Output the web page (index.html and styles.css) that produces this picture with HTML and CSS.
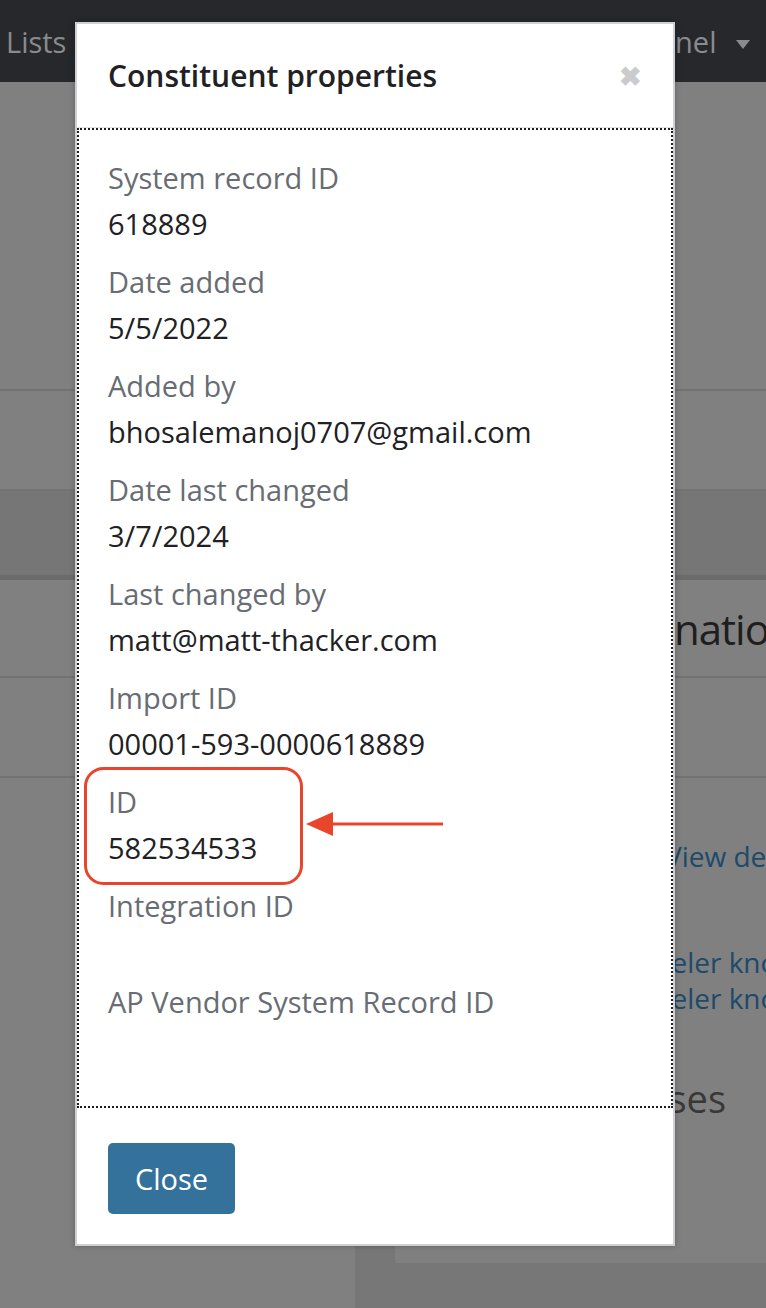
FILE: index.html
```html
<!DOCTYPE html>
<html lang="en">
<head>
    <meta charset="UTF-8">
    <title>Constituent properties</title>
    <link rel="stylesheet" href="styles.css">
</head>
<body>

<div id="page">
    <header class="topbar">
        <span class="nav-item">Lists</span>
        <span class="nav-item nav-right">nel <span class="caret"></span></span>
    </header>

    <div class="row row-tall"></div>
    <div class="row row-mid"></div>
    <div class="row row-band"></div>
    <div class="row row-title"><span class="bg-title">nation</span></div>
    <div class="row row-mid"></div>

    <div class="lower">
        <a class="bg-link link-view">View details</a>
        <a class="bg-link link-first">Traveler knows</a>
        <a class="bg-link">Traveler knows</a>
        <div class="bg-heading">Addresses</div>
        <div class="lower-panel">
            <div class="panel-side"></div>
            <div class="panel-box"></div>
        </div>
    </div>
</div>

<div class="modal">
    <div class="modal-header">
        <h2>Constituent properties</h2>
        <span class="close-x">&#10006;</span>
    </div>

    <div class="modal-body">
        <dl class="props">
            <dt>System record ID</dt>
            <dd>618889</dd>
            <dt>Date added</dt>
            <dd>5/5/2022</dd>
            <dt>Added by</dt>
            <dd>bhosalemanoj0707@gmail.com</dd>
            <dt>Date last changed</dt>
            <dd>3/7/2024</dd>
            <dt>Last changed by</dt>
            <dd>matt@matt-thacker.com</dd>
            <dt>Import ID</dt>
            <dd>00001-593-0000618889</dd>
            <dt>ID</dt>
            <dd>582534533</dd>
            <dt>Integration ID</dt>
            <dd class="empty"></dd>
            <dt>AP Vendor System Record ID</dt>
            <dd class="empty"></dd>
        </dl>

        <!-- annotation over the ID row -->
        <svg class="mark" width="380" height="130" viewBox="0 0 380 130">
            <rect x="8.5" y="2.5" width="216" height="115" rx="18" fill="none" stroke="#e8452c" stroke-width="3"/>
            <line x1="250" y1="58" x2="366" y2="58" stroke="#e8452c" stroke-width="3"/>
            <polygon points="229,58 256,46 256,70" fill="#e8452c"/>
        </svg>
    </div>

    <div class="modal-footer">
        <button class="btn-close">Close</button>
    </div>
</div>

</body>
</html>
```

FILE: styles.css
```css
html, body {
    margin: 0;
    padding: 0;
    width: 100%;
    height: 100%;
    overflow: hidden;
    background: #808080;
    font-family: 'Open Sans', sans-serif;
}

#page {
    display: flex;
    flex-direction: column;
    height: 100%;
}

.topbar {
    display: flex;
    justify-content: space-between;
    align-items: center;
    height: 82px;
    padding: 0 16px 0 6px;
    background: #27282c;
    color: #8a8b8e;
    font-size: 29px;
}

.caret {
    display: inline-block;
    width: 0;
    height: 0;
    margin-left: 12px;
    vertical-align: middle;
    border-left: 7px solid transparent;
    border-right: 7px solid transparent;
    border-top: 9px solid #8a8b8e;
}

.row {
    border-bottom: 2px solid #727272;
}

.row-tall {
    height: 307px;
}

.row-mid {
    height: 98px;
}

.row-band {
    height: 84px;
    background: #767676;
    border-bottom: 5px solid #6b6b6b;
}

.row-title {
    height: 96px;
    display: flex;
    align-items: center;
    padding-left: 674px;
    overflow: hidden;
    white-space: nowrap;
}

.bg-title {
    font-size: 42px;
    color: #1e1e1e;
    letter-spacing: -1px;
}

.lower {
    flex: 1;
    display: flex;
    flex-direction: column;
    align-items: flex-start;
    padding-left: 615px;
    overflow: hidden;
    white-space: nowrap;
}

.bg-link {
    font-size: 28px;
    color: #1d4a6a;
    line-height: 36px;
}

.link-view {
    margin-top: 60px;
    margin-left: 50px;
}

.link-first {
    margin-top: 70px;
}

.bg-heading {
    margin-top: 56px;
    margin-left: -72px;
    font-size: 38px;
    line-height: 52px;
    color: #383838;
}

.lower-panel {
    display: flex;
    margin-left: -260px;
}

.panel-side {
    width: 40px;
    background: #777777;
}

.panel-box {
    width: 400px;
    height: 139px;
    background: #808080;
    border-bottom: 60px solid #777777;
}

/* modal */

.modal {
    position: absolute;
    left: 75px;
    top: 22px;
    width: 596px;
    background: #ffffff;
    border: 2px solid #cfcfd4;
    box-shadow: 0 0 6px rgba(0, 0, 0, 0.25);
}

.modal-header {
    display: flex;
    justify-content: space-between;
    align-items: center;
    height: 103px;
    padding: 0 31px;
    border-bottom: 1px solid #e1e2e4;
}

.modal-header h2 {
    margin: 0;
    font-size: 30px;
    font-weight: 600;
    color: #212124;
}

.close-x {
    font-size: 27px;
    font-weight: 700;
    color: #cbcbce;
}

.modal-body {
    position: relative;
    padding: 32px 31px 28px 31px;
    outline: 2px dotted #1e1e1e;
    outline-offset: -2px;
}

.props {
    margin: 0;
}

.props dt {
    font-size: 29px;
    line-height: 36px;
    color: #686c73;
    margin-bottom: 10px;
}

.props dd {
    margin: 0 0 22px 0;
    font-size: 29px;
    line-height: 36px;
    color: #212124;
}

.props dd.empty {
    height: 28px;
}

.mark {
    position: absolute;
    left: 0;
    top: 638px;
}

.modal-footer {
    padding: 35px 31px 30px 31px;
}

.btn-close {
    width: 127px;
    height: 71px;
    border: none;
    border-radius: 5px;
    background: #34729c;
    color: #ffffff;
    font-family: 'Open Sans', sans-serif;
    font-size: 29px;
}
```
